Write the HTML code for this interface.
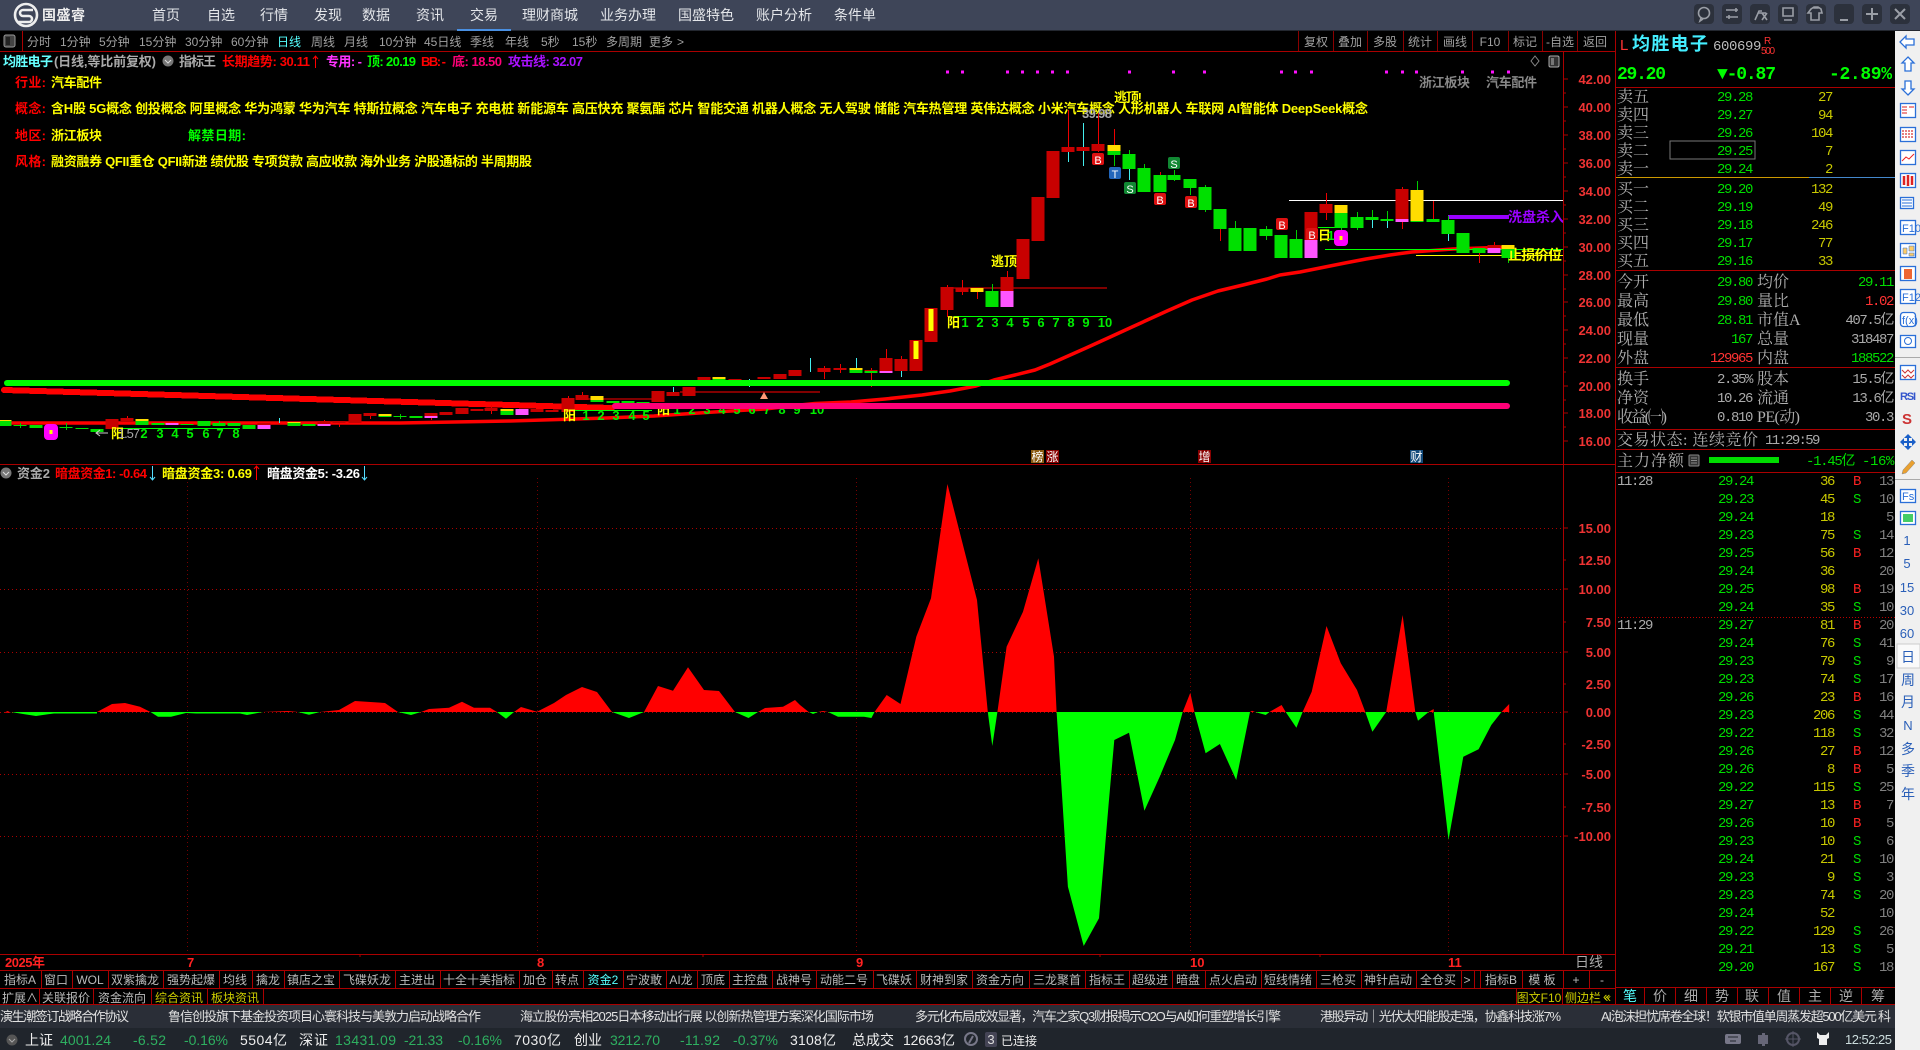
<!DOCTYPE html>
<html lang="zh-CN"><head><meta charset="utf-8"><title>国盛睿</title>
<style>
html,body{margin:0;padding:0;background:#000;width:1920px;height:1050px;overflow:hidden}
svg{position:absolute;left:0;top:0}
text{font-family:"Liberation Sans","WenQuanYi Zen Hei","Noto Sans CJK SC",sans-serif;font-size:13px}
.s text{font-size:12px}
.b text,text.b{font-weight:bold;font-family:"Liberation Sans","Noto Sans CJK SC",sans-serif}
.m text,text.m{font-family:"Liberation Mono","Noto Sans CJK SC",monospace;font-size:14px;letter-spacing:-1.4px}
.l text,text.l{font-family:"Liberation Serif","Noto Serif CJK SC",serif;font-size:16px}
.mid text{text-anchor:middle}
.end text,text.end{text-anchor:end}
#t{position:absolute;left:1617px;top:473px;width:276px;border-collapse:collapse;table-layout:fixed;font:14px/18px "Liberation Mono",monospace;letter-spacing:-1.4px}
#t td{padding:0;height:18px;white-space:nowrap;text-align:right;color:#808080}
#t td:nth-child(1){text-align:left;color:#aaa}
#t td:nth-child(2){color:#0d0}
#t td:nth-child(3){color:#c8c800}
#t td:nth-child(4){padding-right:4px;color:#0d0}
#t td.r{color:#f22!important}
</style></head><body>
<svg width="1920" height="1050" viewBox="0 0 1920 1050" xmlns="http://www.w3.org/2000/svg">
<clipPath id="c"><rect x="1508" y="205" width="55" height="25"/></clipPath>
<rect width="1920" height="30" fill="#3e4558"/>
<rect x="0" y="30" width="1920" height="1" fill="#23272f"/>
<rect x="457" y="29" width="54" height="2" fill="#4a90e2"/>
<!-- logo -->
<circle cx="26" cy="15" r="11" fill="none" stroke="#eee" stroke-width="2.6"/>
<path d="M33 10H23a3 3 0 0 0 0 6h6a3 3 0 0 1 0 6H18" fill="none" stroke="#eee" stroke-width="2.6"/>
<text class="b" x="42" y="20" textLength="43" style="font-size:14px" fill="#eee">国盛睿</text>
<g fill="#e4e6ea">
<text x="152" y="20" style="font-size:14px">首页</text><text x="207" y="20" style="font-size:14px">自选</text><text x="260" y="20" style="font-size:14px">行情</text><text x="314" y="20" style="font-size:14px">发现</text><text x="362" y="20" style="font-size:14px">数据</text><text x="416" y="20" style="font-size:14px">资讯</text><text x="470" y="20" style="font-size:14px">交易</text><text x="522" y="20" style="font-size:14px">理财商城</text><text x="600" y="20" style="font-size:14px">业务办理</text><text x="678" y="20" style="font-size:14px">国盛特色</text><text x="756" y="20" style="font-size:14px">账户分析</text><text x="834" y="20" style="font-size:14px">条件单</text>
</g>
<!-- window controls -->
<g fill="#2c313c"><rect x="1694" y="4" width="20" height="20" rx="4"/><rect x="1722" y="4" width="20" height="20" rx="4"/><rect x="1750" y="4" width="20" height="20" rx="4"/><rect x="1778" y="4" width="20" height="20" rx="4"/><rect x="1806" y="4" width="20" height="20" rx="4"/><rect x="1834" y="4" width="20" height="20" rx="4"/><rect x="1862" y="4" width="20" height="20" rx="4"/><rect x="1890" y="4" width="20" height="20" rx="4"/></g>
<g fill="none" stroke="#9a9ea6" stroke-width="1.6">
<circle cx="1704" cy="13" r="5.5"/><path d="M1701 18l-1 3 3-2"/><path d="M1726 10h12M1726 17h12M1736 8v4M1729 15v4"/>
<path d="M1755 20l4-9h3M1758 13h8M1762 13l5 7M1767 13l-5 7"/><path d="M1783 8h10v8h-10zM1784 20h8"/>
<path d="M1811 9l3-2h2l-1 1h2l-1-1h2l3 2 1 4-3 0v7h-8v-7l-3 0z"/><path d="M1840 20h8" stroke-width="2"/><path d="M1872 8v6h-6M1872 14h6M1872 14v6" stroke-width="2"/><path d="M1895 9l10 10M1905 9l-10 10" stroke-width="2"/>
</g>
<!-- toolbar -->
<rect x="4" y="35" width="11" height="12" rx="2" fill="#444" stroke="#999"/><rect x="6" y="37" width="4" height="8" fill="#222"/>
<rect x="22" y="31" width="1" height="20" fill="#a00"/>
<g class="s" fill="#a0a0a0">
<text x="27" y="46">分时</text><text x="60" y="46">1分钟</text><text x="99" y="46">5分钟</text><text x="139" y="46">15分钟</text><text x="185" y="46">30分钟</text><text x="231" y="46">60分钟</text><text x="277" y="46" fill="#5ff">日线</text><text x="311" y="46">周线</text><text x="344" y="46">月线</text><text x="379" y="46">10分钟</text><text x="424" y="46">45日线</text><text x="470" y="46">季线</text><text x="505" y="46">年线</text><text x="541" y="46">5秒</text><text x="572" y="46">15秒</text><text x="606" y="46">多周期</text><text x="649" y="46">更多</text><text x="677" y="46">&gt;</text>
</g>
<path d="M1298.5 31v20M1333.5 31v20M1367.5 31v20M1403.5 31v20M1437.5 31v20M1472.5 31v20M1508.5 31v20M1542.5 31v20M1577.5 31v20" stroke="#8a0000"/>
<g class="mid s" fill="#a0a0a0"><text x="1316" y="46">复权</text><text x="1350" y="46">叠加</text><text x="1385" y="46">多股</text><text x="1420" y="46">统计</text><text x="1455" y="46">画线</text><text x="1490" y="46">F10</text><text x="1525" y="46">标记</text><text x="1560" y="46">-自选</text><text x="1595" y="46">返回</text></g>
<rect x="0" y="51" width="1615" height="1" fill="#a00"/>
<!-- info row -->
<g class="b">
<text x="3" y="66" textLength="50" fill="#6ff">均胜电子</text>
<text x="54" y="66" textLength="102" fill="#aaa" font-weight="normal">(日线,等比前复权)</text>
<text x="179" y="66" textLength="37" fill="#aaa">指标王</text>
<text x="222" y="66" textLength="88" fill="#f00">长期趋势: 30.11</text>
<text x="326" y="66" textLength="36" fill="#f3f">专用: -</text>
<text x="367" y="66" textLength="49" fill="#0f0">顶: 20.19</text>
<text x="421" y="66" textLength="25" fill="#f00">BB: -</text>
<text x="452" y="66" textLength="50" fill="#f07">底: 18.50</text>
<text x="508" y="66" textLength="75" fill="#a1f">攻击线: 32.07</text>
</g>
<circle cx="168" cy="61" r="5.5" fill="#777"/><path d="M165 60l3 3 3-3" fill="none" stroke="#ddd"/>
<path d="M315.5 56v12M313 59l2.500-3 2.500 3" fill="none" stroke="#f00"/>
<path d="M1535 56l4 5-4 5-4-5z" fill="none" stroke="#888"/><rect x="1549" y="56" width="10" height="11" rx="1.500" fill="#333" stroke="#aaa"/><rect x="1551" y="58" width="3" height="7" fill="#777"/>
<path d="M946 70.500h3v3h-3zM961 70.500h3v3h-3zM1006 70.500h3v3h-3zM1021 70.500h3v3h-3zM1036 70.500h3v3h-3zM1051 70.500h3v3h-3zM1066 70.500h3v3h-3zM1128 70.500h3v3h-3zM1172 70.500h3v3h-3zM1203 70.500h3v3h-3zM1280 70.500h3v3h-3zM1294 70.500h3v3h-3zM1310 70.500h3v3h-3zM1385 70.500h3v3h-3zM1401 70.500h3v3h-3zM1415 70.500h3v3h-3zM1461 70.500h3v3h-3zM1491 70.500h3v3h-3zM1507 70.500h3v3h-3z" fill="#f1f"/>
<!-- chart axis -->
<rect x="1563" y="52" width="1" height="902" fill="#a00"/>
<rect x="1615" y="31" width="1" height="974" fill="#a00"/>
<path d="M1563 79h5M1563 107h5M1563 135h5M1563 163h5M1563 191h5M1563 219h5M1563 247h5M1563 275h5M1563 302h5M1563 330h5M1563 358h5M1563 386h5M1563 413h5M1563 441h5M1563 93h3M1563 121h3M1563 149h3M1563 177h3M1563 205h3M1563 233h3M1563 261h3M1563 289h3M1563 316h3M1563 344h3M1563 372h3M1563 400h3M1563 427h3M1563 528h5M1563 560h3M1563 589h5M1563 622h3M1563 652h5M1563 684h3M1563 712h5M1563 744h3M1563 774h5M1563 807h3M1563 836h5" stroke="#a00" fill="none"/>
<g class="b end" fill="#e33">
<text x="1611" y="84">42.00</text><text x="1611" y="112">40.00</text><text x="1611" y="140">38.00</text><text x="1611" y="168">36.00</text><text x="1611" y="196">34.00</text><text x="1611" y="224">32.00</text><text x="1611" y="252">30.00</text><text x="1611" y="280">28.00</text><text x="1611" y="307">26.00</text><text x="1611" y="335">24.00</text><text x="1611" y="363">22.00</text><text x="1611" y="391">20.00</text><text x="1611" y="418">18.00</text><text x="1611" y="446">16.00</text>
<text x="1611" y="533">15.00</text><text x="1611" y="565">12.50</text><text x="1611" y="594">10.00</text><text x="1611" y="627">7.50</text><text x="1611" y="657">5.00</text><text x="1611" y="689">2.50</text><text x="1611" y="717">0.00</text><text x="1611" y="749">-2.50</text><text x="1611" y="779">-5.00</text><text x="1611" y="812">-7.50</text><text x="1611" y="841">-10.00</text>
</g>
<!-- yellow text rows -->
<g class="b" fill="#f00"><text x="15" y="87" textLength="31">行业:</text><text x="15" y="113" textLength="31">概念:</text><text x="15" y="140" textLength="31">地区:</text><text x="15" y="166" textLength="31">风格:</text></g>
<g class="b" fill="#ff0">
<text x="51" y="87" textLength="51">汽车配件</text>
<text x="51" y="113" textLength="1317">含H股 5G概念 创投概念 阿里概念 华为鸿蒙 华为汽车 特斯拉概念 汽车电子 充电桩 新能源车 高压快充 聚氨酯 芯片 智能交通 机器人概念 无人驾驶 储能 汽车热管理 英伟达概念 小米汽车概念 人形机器人 车联网 AI智能体 DeepSeek概念</text>
<text x="51" y="140" textLength="51">浙江板块</text>
<text x="51" y="166" textLength="481">融资融券 QFII重仓 QFII新进 绩优股 专项贷款 高应收款 海外业务 沪股通标的 半周期股</text>
</g>
<text class="b" x="188" y="140" textLength="58" fill="#0f0">解禁日期:</text>
<g class="b" fill="#888"><text x="1419" y="87" textLength="51">浙江板块</text><text x="1486" y="87" textLength="51">汽车配件</text></g>
<!-- thick lines below candles -->
<path d="M4 390L612 408" stroke="#f00" stroke-width="6" fill="none" shape-rendering="crispEdges" stroke-linecap="round"/>
<path d="M0 423L400 423 510 421 607 418 654 416 714 412 765 409 800 405 815 403.500 851 402 885 399 922 395 950 391 976 386 994 380 1015 375 1035 370 1050 364 1086 348 1108 338 1132 327 1167 311 1192 300 1218 291 1243 285 1267 279 1280 275 1300 272 1325 267 1345 263 1366 259 1390 255 1412 252 1453 249 1509 247" stroke="#f00" stroke-width="3.500" fill="none" stroke-linejoin="round"/>
<!-- thin annotation lines -->
<path d="M948 288H1107M680 392H820M576 399H653" stroke="#f00" fill="none"/>
<path d="M954 316.500H1107M112 428.500H240M570 410.500H652M1318 227.500H1336M1325 249.500H1563" stroke="#0f0" fill="none"/>
<path d="M1289 200.500H1563" stroke="#fff" fill="none"/>
<path d="M1416 255.500H1563" stroke="#ff0" fill="none"/>
<rect x="1448" y="215" width="61" height="4" fill="#90f"/>
<!-- wicks -->
<path fill="none" stroke="#e00" d="M947.500 285V317M962.500 280V295M901.500 356V367M886.500 349V358M824.500 366V379M840.500 364V373M1007.500 271V277M1068.500 110V147M1098.500 113V152M1326.500 193V220M1402.500 187V229M1433.500 201V219M1494.500 242V245M1479.500 248V263M582.500 392V400M568.500 396V398M491.500 405V414M977.500 292V299M1083.500 140V147M871.500 368V387M339.500 421V427M370.500 413V419M431.500 413V420M324.500 420V424M127.500 416V421M1114.500 129V145M1160.500 172V175M1220.500 229V241"/>
<path fill="none" stroke="#0c0" d="M1114.500 155V166M1129.500 150V180M1144.500 164V168M1174.500 170V181M1190.500 188V195M1205.500 185V212M1235.500 221V228M1266.500 226V240M1296.500 230V239M1341.500 228V232M1357.500 212V230M1372.500 210V228M1387.500 211V228M1448.500 216V241M1417.500 181V190M992.500 284V291M66.500 423V430M20.500 423V428M1508.500 258V263M400.500 414V419M219.500 421V423"/>
<path fill="none" stroke="#4ee" d="M1068.500 152V162M1083.500 123V166M856.500 358V368M810.500 358V372M279.500 418V423M749.500 379V387M673.500 387V392M901.500 371V377M1129.500 169V180M1372.500 220V228M1387.500 221V228M1448.500 234V241"/>
<!-- bodies: red -->
<path fill="#c80000" d="M105.500 419h13v10h-13zM120.500 418h13v3h-13zM257.500 423h13v2h-13zM317.500 421h13v3h-13zM332.500 421h13v2h-13zM348.500 414h13v9h-13zM363.500 413h13v3h-13zM424.500 413h13v3h-13zM439.500 412h13v3h-13zM455.500 408h13v6h-13zM470.500 409h13v2h-13zM484.500 408h13v3h-13zM530.500 409h13v3h-13zM545.500 410h13v2h-13zM561.500 398h13v14h-13zM575.500 395h13v5h-13zM651.500 391h13v11h-13zM666.500 392h13v4h-13zM682.500 387h13v9h-13zM697.500 377h13v3h-13zM728.500 379h13v1h-13zM757.500 377h13v2h-13zM773.500 374h13v5h-13zM788.500 370h13v6h-13zM817.500 368h13v4h-13zM833.500 368h13v2h-13zM864.500 370h13v1h-13zM879.500 358h13v13h-13zM894.500 359h13v12h-13zM909.500 340h13v31h-13zM924.500 308h13v34h-13zM940.500 287h13v23h-13zM955.500 288h13v4h-13zM1000.500 277h13v14h-13zM1016.500 239h13v40h-13zM1031.500 197h13v44h-13zM1046.500 151h13v47h-13zM1061.500 147h13v5h-13zM1076.500 147h13v4h-13zM1091.500 144h13v7h-13zM1319.500 204h13v9h-13zM1304.500 212h13v28h-13zM1395.500 189h13v30h-13zM1487.500 245h13v3h-13z"/>
<!-- bodies: green -->
<path fill="#00e000" d="M-1.500 421h13v5h-13zM13.500 425h13v1h-13zM29.500 425h13v3h-13zM59.500 427h13v1h-13zM75.500 428h13v1h-13zM90.500 429h13v3h-13zM135.500 421h13v4h-13zM151.500 423h13v2h-13zM180.500 424h13v1h-13zM197.500 421h13v5h-13zM212.500 423h13v3h-13zM227.500 423h13v3h-13zM242.500 425h13v4h-13zM287.500 423h13v3h-13zM302.500 424h13v2h-13zM378.500 416h13v1h-13zM393.500 416h13v1h-13zM409.500 416h13v2h-13zM500.500 411h13v4h-13zM590.500 400h13v2h-13zM606.500 401h13v2h-13zM621.500 401h13v2h-13zM636.500 402h13v1h-13zM712.500 379h13v1h-13zM849.500 370h13v3h-13zM864.500 371h13v2h-13zM985.500 291h13v16h-13zM1107.500 151h13v4h-13zM1122.500 154h13v15h-13zM1137.500 168h13v24h-13zM1153.500 175h13v17h-13zM1167.500 175h13v5h-13zM1183.500 179h13v9h-13zM1198.500 187h13v23h-13zM1213.500 209h13v20h-13zM1228.500 228h13v23h-13zM1243.500 228h13v23h-13zM1259.500 229h13v7h-13zM1274.500 235h13v23h-13zM1289.500 239h13v19h-13zM1334.500 213h13v15h-13zM1350.500 217h13v11h-13zM1365.500 217h13v3h-13zM1380.500 219h13v2h-13zM1410.500 221h13v1h-13zM1426.500 219h13v3h-13zM1441.500 220h13v14h-13zM1456.500 233h13v20h-13zM1472.500 248h13v5h-13zM1501.500 249h13v9h-13z"/>
<!-- bodies: yellow -->
<path fill="#fd0" d="M-1.500 420h13v1h-13zM135.500 419h13v2h-13zM287.500 422h13v1h-13zM378.500 414h13v2h-13zM500.500 409h13v2h-13zM590.500 396h13v4h-13zM712.500 377h13v2h-13zM849.500 368h13v2h-13zM970.500 288h13v4h-13zM1107.500 145h13v6h-13zM1334.500 205h13v8h-13zM1410.500 190h13v31h-13zM1501.500 245h13v4h-13z"/>
<path fill="#ff0" d="M913.500 341h5v18h-5zM928.500 309h5v22h-5z"/>
<!-- bodies: magenta -->
<path fill="#ff55ff" d="M165.500 423h13v2h-13zM257.500 425h13v4h-13zM317.500 424h13v2h-13zM424.500 416h13v2h-13zM515.500 409h13v6h-13zM879.500 371h13v2h-13zM1000.500 291h13v16h-13zM1304.500 240h13v18h-13zM1395.500 219h13v3h-13zM1487.500 248h13v5h-13z"/>
<!-- flowers -->
<rect x="44" y="424" width="14" height="16" rx="4" fill="#f0f"/><rect x="49.500" y="430" width="3" height="4" fill="#ff0"/>
<rect x="1334" y="230" width="14" height="16" rx="4" fill="#f0f"/><rect x="1339.500" y="236" width="3" height="4" fill="#ff0"/>
<!-- B/S/T markers -->
<g>
<rect x="1092" y="153" width="12" height="12" rx="2" fill="#d11"/><rect x="1154" y="193" width="12" height="12" rx="2" fill="#d11"/><rect x="1185" y="196" width="12" height="12" rx="2" fill="#d11"/><rect x="1276" y="218" width="12" height="12" rx="2" fill="#d11"/><rect x="1306" y="228" width="12" height="12" rx="2" fill="#d11"/>
<rect x="1109" y="167" width="12" height="12" rx="2" fill="#26b"/>
<rect x="1124" y="182" width="12" height="12" rx="2" fill="#183"/><rect x="1168" y="157" width="12" height="12" rx="2" fill="#183"/>
</g>
<g class="mid" fill="#fff"><text x="1098" y="164" style="font-size:11px">B</text><text x="1160" y="204" style="font-size:11px">B</text><text x="1191" y="207" style="font-size:11px">B</text><text x="1282" y="229" style="font-size:11px">B</text><text x="1312" y="239" style="font-size:11px">B</text><text x="1115" y="178" style="font-size:11px">T</text><text x="1130" y="193" style="font-size:11px">S</text><text x="1174" y="168" style="font-size:11px">S</text></g>
<!-- annotation text -->
<g class="b" fill="#ff0"><text x="991" y="266" textLength="26">逃顶</text><text x="1114" y="102" textLength="28">逃顶!</text><text x="947" y="327" textLength="12">阳</text><text x="563" y="420" textLength="12">阳</text><text x="657" y="414" textLength="12">阳</text><text x="111" y="438" textLength="13">阳</text><text x="1318" y="240" textLength="8">日</text></g>
<text class="b" x="1082" y="118" textLength="30" fill="#aaa">39.98</text>
<path d="M108 433H96M100 430l-4 3 4 3" fill="none" stroke="#ccc"/><text x="118" y="438" textLength="22" fill="#aaa">1.57</text>
<g class="b mid" fill="#0e0">
<text x="965" y="327">1</text><text x="980" y="327">2</text><text x="995" y="327">3</text><text x="1010" y="327">4</text><text x="1026" y="327">5</text><text x="1041" y="327">6</text><text x="1056" y="327">7</text><text x="1071" y="327">8</text><text x="1086" y="327">9</text><text x="1105" y="327">10</text>
<text x="144" y="438">2</text><text x="160" y="438">3</text><text x="175" y="438">4</text><text x="190" y="438">5</text><text x="206" y="438">6</text><text x="220" y="438">7</text><text x="236" y="438">8</text>
<text x="586" y="420">1</text><text x="601" y="420">2</text><text x="616" y="420">3</text><text x="632" y="420">4</text><text x="646" y="420">5</text>
<text x="677" y="414">1</text><text x="692" y="414">2</text><text x="707" y="414">3</text><text x="722" y="414">4</text><text x="737" y="414">5</text><text x="752" y="414">6</text><text x="767" y="414">7</text><text x="782" y="414">8</text><text x="797" y="414">9</text><text x="817" y="414">10</text>
<text x="1331" y="240">1</text>
</g>
<path d="M764 392l4 7h-8z" fill="#f97"/>
<text class="b" x="1508" y="222" textLength="70" fill="#90f" clip-path="url(#c)" style="font-size:14px">洗盘杀入线</text>
<text class="b" x="1508" y="260" textLength="54" fill="#ff0" style="font-size:14px">止损价位</text>
<!-- green and pink thick lines -->
<path d="M7 383H1507" stroke="#0f0" stroke-width="6" stroke-linecap="round"/>
<path d="M615 406H1507" stroke="#f07" stroke-width="6" stroke-linecap="round"/>
<!-- bottom badges -->
<rect x="1031" y="450" width="13" height="13" fill="#8a5a10"/><rect x="1046" y="450" width="13" height="13" fill="#800"/><rect x="1198" y="450" width="13" height="13" fill="#800"/><rect x="1410" y="450" width="13" height="13" fill="#134a7a"/>
<g class="mid" fill="#fff"><text x="1037.500" y="461" style="font-size:12px">榜</text><text x="1052.500" y="461" style="font-size:12px">涨</text><text x="1204.500" y="461" style="font-size:12px">增</text><text x="1416.500" y="461" style="font-size:12px">财</text></g>
<rect x="0" y="464" width="1615" height="1" fill="#a00"/>
<!-- sub chart header -->
<circle cx="6" cy="473" r="5.500" fill="#777"/><path d="M3 472l3 3 3-3" fill="none" stroke="#ddd"/>
<g class="b"><text x="17" y="478" textLength="33" fill="#aaa">资金2</text><text x="55" y="478" textLength="92" fill="#f00">暗盘资金1: -0.64</text><text x="162" y="478" textLength="90" fill="#ff0">暗盘资金3: 0.69</text><text x="267" y="478" textLength="93" fill="#fff">暗盘资金5: -3.26</text></g>
<path d="M152.500 466v14M150 477l2.500 3 2.500-3M364.500 466v14M362 477l2.500 3 2.500-3" fill="none" stroke="#5df"/><path d="M256.500 466v14M254 469l2.500-3 2.500 3" fill="none" stroke="#f00"/>
<!-- grid -->
<path d="M0 528.500H1563M0 589.500H1563M0 652.500H1563M0 712.500H1563M0 774.500H1563M0 836.500H1563" stroke="#a00" stroke-dasharray="1 3" fill="none"/>
<path d="M187.500 478V954M537.500 478V954M856.500 478V954M1190.500 478V954M1448.500 478V954" stroke="#700" stroke-dasharray="1 3" fill="none"/>
<!-- sub chart -->
<path fill="#f00" d="M4 712.700L7.600 711 11 712.700ZM97 712 112 704 125 703 140 706.700 150.500 712ZM263 712 288 711 298 712ZM320 712 339 710 355 701 385 703 398 712ZM421 712 429 709 449 707.700 462 701.700 474 707.700 490 707.700 497 712ZM514 712 521 707 537 711.700 554 703 566 695 582 687 597 692 612 712ZM644 712 658 686 673 690.700 688 667.300 704 690 719 691 735 712ZM758 712 765 708 783 706.700 795 700 800 705 808.700 712ZM818 712 823 711 828 712ZM874.500 712 886.700 695 900.500 704 916.300 636.700 931 598.300 947.400 484 977 600 987.800 712ZM997.400 712 1006.600 646.700 1023 611.700 1038.300 558.300 1054 656.700 1056.600 712ZM1182.700 712 1190.300 692.700 1194.400 712ZM1250 712 1252 710.700 1255 712ZM1269.400 712 1281.600 705 1285.700 712ZM1302.600 712 1311.700 691.700 1326.500 626 1340.800 663.300 1357 690 1365.300 712ZM1386.200 712 1402.600 615 1415.300 712ZM1428.600 712 1433.700 709 1433.700 712ZM1501.500 712 1509.200 704 1509.200 712Z"/>
<path fill="#0f0" d="M11 712 23 714 36 716 48 714.300 54 713.500 97 713.500 97 712ZM150.500 712 158 716.700 171 716.700 186 713 196 713.500 240 713.500 247 715 255 713.500 263 712ZM298 712 309 714.700 320 712ZM398 712 411 715 421 712ZM497 712 506 718.700 514 712ZM612 712 629 718 644 712ZM735 712 748.500 718 758 712ZM809 712 813 714 818 712ZM828 712 838 716.700 864 716.700 871.400 718 874.500 712ZM987.800 712 992.300 746 997.400 712ZM1056.600 712 1061.700 790 1067.900 886.700 1083.700 946 1099 918.300 1108.700 803.300 1114.300 740 1129 732.700 1144.400 810.700 1159.700 776.700 1175 740 1182.700 712ZM1194.400 712 1205.600 753.300 1219.900 744 1236.200 780 1250 712ZM1255 712 1265.800 715 1269.400 712ZM1285.700 712 1296.400 727.700 1302.600 712ZM1365.300 712 1372.400 731.700 1386.200 712ZM1415.300 712 1418 720.700 1428.600 712ZM1433.700 712 1448.500 840 1463.300 756.700 1478.600 749.300 1491.300 725 1501.500 712Z"/>
<!-- date row -->
<rect x="0" y="954" width="1615" height="1" fill="#a00"/>
<rect x="0" y="970" width="1615" height="1" fill="#a00"/>
<g class="b" fill="#f22"><text x="5" y="967" textLength="40">2025年</text><text x="187" y="967">7</text><text x="537" y="967">8</text><text x="856" y="967">9</text><text x="1190" y="967">10</text><text x="1448" y="967">11</text></g>
<text x="1575" y="967" fill="#aaa" style="font-size:14px">日线</text>
<path d="M360 954v3M703 954v3M1100 954v3M1320 954v3" stroke="#a00"/>
<!-- tab row -->
<rect x="0" y="988" width="1615" height="1" fill="#a00"/>
<path d="M41.500 971V988M72.500 971V988M108.500 971V988M163.500 971V988M219.500 971V988M252.500 971V988M284.500 971V988M339.500 971V988M395.500 971V988M440.500 971V988M519.500 971V988M552.500 971V988M583.500 971V988M623.500 971V988M666.500 971V988M697.500 971V988M729.500 971V988M772.500 971V988M816.500 971V988M873.500 971V988M916.500 971V988M972.500 971V988M1029.500 971V988M1085.500 971V988M1129.500 971V988M1172.500 971V988M1205.500 971V988M1261.500 971V988M1316.500 971V988M1361.500 971V988M1416.500 971V988M1461.500 971V988M1474.500 971V988M1480.500 971V988M1522.500 971V988M1563.500 971V988M1589.500 971V988" stroke="#a00"/>
<g class="mid s" fill="#bbb"><text x="20" y="984">指标A</text><text x="56" y="984">窗口</text><text x="90" y="984">WOL</text><text x="135" y="984">双紫擒龙</text><text x="191" y="984">强势起爆</text><text x="235" y="984">均线</text><text x="268" y="984">擒龙</text><text x="311" y="984">镇店之宝</text><text x="367" y="984">飞碟妖龙</text><text x="417" y="984">主进出</text><text x="479" y="984">十全十美指标</text><text x="535" y="984">加仓</text><text x="567" y="984">转点</text><text x="603" y="984" fill="#5ff">资金2</text><text x="644" y="984">宁波敢</text><text x="681" y="984">AI龙</text><text x="713" y="984">顶底</text><text x="750" y="984">主控盘</text><text x="794" y="984">战神号</text><text x="844" y="984">动能二号</text><text x="894" y="984">飞碟妖</text><text x="944" y="984">财神到家</text><text x="1000" y="984">资金方向</text><text x="1057" y="984">三龙聚首</text><text x="1107" y="984">指标王</text><text x="1150" y="984">超级进</text><text x="1188" y="984">暗盘</text><text x="1233" y="984">点火启动</text><text x="1288" y="984">短线情绪</text><text x="1338" y="984">三枪买</text><text x="1388" y="984">神针启动</text><text x="1438" y="984">全仓买</text><text x="1467" y="984">&gt;</text><text x="1501" y="984">指标B</text><text x="1542" y="984">模 板</text><text x="1576" y="984">+</text><text x="1602" y="984">-</text></g>
<!-- second row -->
<rect x="0" y="1004" width="1615" height="1" fill="#a00"/>
<path d="M39.500 989V1005M93.500 989V1005M151.500 989V1005M207.500 989V1005M263.500 989V1005M1516.500 989V1005M1562.500 989V1005" stroke="#a00"/>
<g class="mid s"><text x="20" y="1002" fill="#bbb">扩展∧</text><text x="66" y="1002" fill="#bbb">关联报价</text><text x="122" y="1002" fill="#bbb">资金流向</text><text x="179" y="1002" fill="#cc0">综合资讯</text><text x="235" y="1002" fill="#cc0">板块资讯</text><text x="1539" y="1002" fill="#cc0">图文F10</text><text x="1588" y="1002" fill="#cc0">侧边栏 «</text></g>
<!-- news bar -->
<rect x="0" y="1005" width="1895" height="23" fill="#2a2e37"/>
<g fill="#e0e0e0"><text x="0" y="1021" textLength="129">演生潮签订战略合作协议</text><text x="168" y="1021" textLength="313">鲁信创投旗下基金投资项目心寰科技与美敦力启动战略合作</text><text x="520" y="1021" textLength="354">海立股份亮相2025日本移动出行展 以创新热管理方案深化国际市场</text><text x="915" y="1021" textLength="366">多元化布局成效显著，汽车之家Q3财报揭示O2O与AI如何重塑增长引擎</text><text x="1320" y="1021" textLength="241">港股异动｜光伏太阳能股走强，协鑫科技涨7%</text><text x="1601" y="1021" textLength="290">AI泡沫担忧席卷全球！软银市值单周蒸发超500亿美元 科</text></g>
<!-- status bar -->
<rect x="0" y="1028" width="1895" height="22" fill="#20252c"/>
<circle cx="12" cy="1040" r="5.500" fill="#555"/><path d="M9 1039l3 3 3-3" fill="none" stroke="#aaa"/>
<g>
<text x="25" y="1045" fill="#eee" textLength="28" style="font-size:14px">上证</text><text x="60" y="1045" fill="#2eb060" textLength="51" style="font-size:14px">4001.24</text><text x="133" y="1045" fill="#2eb060" textLength="33" style="font-size:14px">-6.52</text><text x="184" y="1045" fill="#2eb060" textLength="44" style="font-size:14px">-0.16%</text><text x="240" y="1045" fill="#eee" textLength="47" style="font-size:14px">5504亿</text>
<text x="299" y="1045" fill="#eee" textLength="29" style="font-size:14px">深证</text><text x="335" y="1045" fill="#2eb060" textLength="61" style="font-size:14px">13431.09</text><text x="404" y="1045" fill="#2eb060" textLength="39" style="font-size:14px">-21.33</text><text x="458" y="1045" fill="#2eb060" textLength="44" style="font-size:14px">-0.16%</text><text x="514" y="1045" fill="#eee" textLength="47" style="font-size:14px">7030亿</text>
<text x="574" y="1045" fill="#eee" textLength="28" style="font-size:14px">创业</text><text x="610" y="1045" fill="#2eb060" textLength="50" style="font-size:14px">3212.70</text><text x="680" y="1045" fill="#2eb060" textLength="40" style="font-size:14px">-11.92</text><text x="733" y="1045" fill="#2eb060" textLength="45" style="font-size:14px">-0.37%</text><text x="790" y="1045" fill="#eee" textLength="46" style="font-size:14px">3108亿</text>
<text x="852" y="1045" fill="#eee" textLength="42" style="font-size:14px">总成交</text><text x="903" y="1045" fill="#eee" textLength="52" style="font-size:14px">12663亿</text>
<text x="1001" y="1045" fill="#eee" textLength="36" style="font-size:12px">已连接</text>
</g>
<circle cx="971" cy="1039" r="6" fill="none" stroke="#778" stroke-width="2"/><path d="M969 1043l4-7" stroke="#778" stroke-width="2"/>
<rect x="985" y="1032" width="12" height="15" rx="2" fill="#445"/><text x="991" y="1044" text-anchor="middle" fill="#ddd">3</text>
<rect x="1725" y="1034" width="16" height="10" rx="2" fill="#778"/><path d="M1728 1037h10M1730 1041h6" stroke="#20252c"/>
<path d="M1758 1035h4v-2h3v2h3v9h-3v2h-3v-2h-4z" fill="#667"/>
<circle cx="1793" cy="1039" r="6" fill="none" stroke="#556" stroke-width="2"/><path d="M1793 1031v16M1785 1039h16" stroke="#556"/>
<path d="M1817 1032l3 3h6l3-3v6l-2 1v6h-8v-6l-2-1z" fill="#eee"/>
<text x="1845" y="1044" textLength="47" fill="#cdd" style="font-size:13px">12:52:25</text>
<!-- right panel -->
<rect x="1616" y="87" width="279" height="1" fill="#a00"/>
<rect x="1616" y="177" width="193" height="1" fill="#c90"/><rect x="1809" y="177" width="86" height="1" fill="#48c"/>
<rect x="1616" y="270" width="279" height="1" fill="#a00"/>
<rect x="1616" y="367" width="279" height="1" fill="#a00"/>
<rect x="1616" y="429" width="279" height="1" fill="#a00"/>
<rect x="1616" y="449" width="279" height="1" fill="#a00"/>
<rect x="1616" y="472" width="279" height="1" fill="#a00"/>
<path d="M1618 617.500H1895" stroke="#b00" stroke-dasharray="1 2"/>
<text x="1620" y="50" fill="#f33" style="font-size:15px">L</text>
<text class="b" x="1632" y="50" textLength="76" fill="#4ef" style="font-size:18px">均胜电子</text>
<text class="m" x="1713" y="50" fill="#bbb" textLength="47">600699</text>
<text x="1764" y="44" fill="#f33" style="font-size:10px">R</text><text x="1761" y="54" fill="#f33" textLength="14" style="font-size:10px">500</text>
<g class="b" fill="#0f0"><text x="1617" y="79" textLength="49" style="font-size:18px;font-family:'Liberation Mono'">29.20</text><text x="1717" y="79" textLength="59" style="font-size:18px;font-family:'Liberation Mono'">▼-0.87</text><text x="1829" y="79" textLength="63" style="font-size:18px;font-family:'Liberation Mono'">-2.89%</text></g>
<rect x="1670" y="141" width="85" height="18" fill="none" stroke="#777"/>
<g class="l" fill="#b0b0b0">
<text x="1617" y="102">卖五</text><text x="1617" y="120">卖四</text><text x="1617" y="138">卖三</text><text x="1617" y="156">卖二</text><text x="1617" y="174">卖一</text>
<text x="1617" y="194">买一</text><text x="1617" y="212">买二</text><text x="1617" y="230">买三</text><text x="1617" y="248">买四</text><text x="1617" y="266">买五</text>
<text x="1617" y="287">今开</text><text x="1617" y="306">最高</text><text x="1617" y="325">最低</text><text x="1617" y="344">现量</text><text x="1617" y="363">外盘</text>
<text x="1617" y="384">换手</text><text x="1617" y="403">净资</text><text x="1617" y="422" textLength="50">收益(㈠)</text>
<text x="1757" y="287">均价</text><text x="1757" y="306">量比</text><text x="1757" y="325">市值A</text><text x="1757" y="344">总量</text><text x="1757" y="363">内盘</text><text x="1757" y="384">股本</text><text x="1757" y="403">流通</text><text x="1757" y="422" textLength="43">PE(动)</text>
<text x="1617" y="445" textLength="141">交易状态: 连续竞价</text><text x="1617" y="466" textLength="67">主力净额</text>
</g>
<g class="m end" fill="#0d0">
<text x="1752" y="101">29.28</text><text x="1752" y="119">29.27</text><text x="1752" y="137">29.26</text><text x="1752" y="155">29.25</text><text x="1752" y="173">29.24</text>
<text x="1752" y="193">29.20</text><text x="1752" y="211">29.19</text><text x="1752" y="229">29.18</text><text x="1752" y="247">29.17</text><text x="1752" y="265">29.16</text>
<text x="1752" y="286">29.80</text><text x="1752" y="305">29.80</text><text x="1752" y="324">28.81</text><text x="1752" y="343">167</text>
<text x="1893" y="286">29.11</text><text x="1893" y="362">188522</text>
</g>
<g class="m end" fill="#c8c800">
<text x="1832" y="101">27</text><text x="1832" y="119">94</text><text x="1832" y="137">104</text><text x="1832" y="155">7</text><text x="1832" y="173">2</text>
<text x="1832" y="193">132</text><text x="1832" y="211">49</text><text x="1832" y="229">246</text><text x="1832" y="247">77</text><text x="1832" y="265">33</text>
</g>
<g class="m end" fill="#f33"><text x="1752" y="362">129965</text><text x="1893" y="305">1.02</text></g>
<g class="m end" fill="#aaa">
<text x="1893" y="324">407.5亿</text><text x="1893" y="343">318487</text><text x="1893" y="383">15.5亿</text><text x="1893" y="402">13.6亿</text><text x="1893" y="421">30.3</text>
<text x="1752" y="383">2.35%</text><text x="1752" y="402">10.26</text><text x="1752" y="421">0.810</text>
</g>
<text class="m" x="1765" y="444" fill="#aaa" textLength="54">11:29:59</text>
<rect x="1689" y="455" width="10" height="11" rx="1" fill="#333" stroke="#888"/><path d="M1691 458h6M1691 460.500h6M1691 463h6" stroke="#888"/>
<rect x="1709" y="457" width="70" height="6" fill="#0d0"/>
<text class="m" x="1806" y="465" textLength="48" fill="#0d0">-1.45亿</text><text class="m" x="1862" y="465" textLength="31" fill="#0d0">-16%</text>
<!-- panel bottom tabs -->
<rect x="1616" y="987" width="279" height="1" fill="#a00"/>
<rect x="1600" y="1004" width="295" height="1" fill="#a00"/>
<path d="M1644.500 987V1005M1675.500 987V1005M1706.500 987V1005M1737.500 987V1005M1768.500 987V1005M1799.500 987V1005M1830.500 987V1005M1861.500 987V1005" stroke="#a00"/>
<text x="1603" y="1001" fill="#cc0">«</text>
<g class="mid" fill="#aaa"><text x="1630" y="1001" fill="#5ff" style="font-size:14px">笔</text><text x="1660" y="1001" style="font-size:14px">价</text><text x="1691" y="1001" style="font-size:14px">细</text><text x="1722" y="1001" style="font-size:14px">势</text><text x="1752" y="1001" style="font-size:14px">联</text><text x="1784" y="1001" style="font-size:14px">值</text><text x="1815" y="1001" style="font-size:14px">主</text><text x="1846" y="1001" style="font-size:14px">逆</text><text x="1878" y="1001" style="font-size:14px">筹</text></g>
<!-- sidebar -->
<rect x="1895" y="31" width="25" height="1019" fill="#f0f0f0"/>
<g fill="#fff" stroke="#2a6fd8" stroke-width="1.300">
<path d="M1900 42l6-6v3h8v6h-8v3z"/><path d="M1908 57l6 6h-3v8h-6v-8h-3z"/><path d="M1908 95l6-6h-3v-8h-6v8h-3z"/>
<rect x="1900.500" y="103.500" width="15" height="14"/><rect x="1900.500" y="127.500" width="15" height="14"/><rect x="1900.500" y="150.500" width="15" height="14"/><rect x="1900.500" y="173.500" width="15" height="14"/><rect x="1900.500" y="197.500" width="13" height="11"/>
<rect x="1900.500" y="220.500" width="15" height="14"/><rect x="1900.500" y="243.500" width="15" height="14"/><rect x="1900.500" y="266.500" width="15" height="14"/><rect x="1900.500" y="289.500" width="15" height="14"/><rect x="1900.500" y="312.500" width="15" height="14" rx="3"/><rect x="1900.500" y="335.500" width="15" height="12"/><rect x="1900.500" y="365.500" width="15" height="14"/><rect x="1900.500" y="489.500" width="15" height="13"/><rect x="1900.500" y="511.500" width="15" height="13"/>
</g>
<path d="M1902 107h5M1902 110h5M1902 113h5M1909 107h5" stroke="#d22" fill="none"/><path d="M1902 131h11M1902 134h11M1902 137h11" stroke="#c00" stroke-dasharray="2 1" fill="none"/>
<path d="M1902 161l4-4 3 2 5-5" stroke="#e22" fill="none"/>
<path d="M1904 176v9M1908 175v11M1912 176v9" stroke="#d22" stroke-width="2.500" fill="none"/>
<path d="M1902 200h10M1902 203h10M1902 206h10" stroke="#2a6fd8" fill="none"/>
<path d="M1903 248h4v6h-4zM1909 246h5v5h-5zM1909 253h5v3h-5z" fill="#fc6" stroke="#2a6fd8" stroke-width=".5"/>
<path d="M1904 269h8v10h-8z" fill="#e63"/>
<g fill="#2a6fd8"><text x="1902" y="232" style="font-size:11px">F10</text><text x="1902" y="301" style="font-size:11px">F12</text><text x="1902" y="324" style="font-size:11px">f(x)</text><text x="1902" y="500" style="font-size:11px">Fs</text></g>
<circle cx="1908" cy="341" r="3.500" fill="none" stroke="#2a6fd8"/>
<rect x="1895" y="357" width="25" height="1" fill="#aaa"/><rect x="1895" y="479" width="25" height="1" fill="#aaa"/>
<path d="M1902 370l3 3 3-3 3 3 3-3M1902 375l3 3 3-3 3 3 3-3" stroke="#c33" fill="none"/>
<text class="b" x="1900" y="400" fill="#35c" textLength="16" style="font-size:11px">RSI</text>
<text class="b" x="1902" y="424" fill="#c33" style="font-size:15px">S</text>
<path d="M1908 434l4 4h-3v3h3v-3l4 4-4 4v-3h-3v3h3l-4 4-4-4h3v-3h-3v3l-4-4 4-4v3h3v-3h-3z" fill="#1a5fc8"/>
<path d="M1903 470l9-10 3 3-9 10-4 1z" fill="#e9a030" stroke="#888" stroke-width=".5"/>
<rect x="1903" y="514" width="10" height="8" fill="#4c6"/>
<rect x="1897" y="644" width="23" height="24" fill="#fafafa" stroke="#ccc"/>
<g class="mid" fill="#2a5fb8"><text x="1907" y="545">1</text><text x="1907" y="568">5</text><text x="1907" y="592">15</text><text x="1907" y="615">30</text><text x="1907" y="638">60</text><text x="1908" y="662" style="font-size:14px">日</text><text x="1908" y="685" style="font-size:14px">周</text><text x="1908" y="707" style="font-size:14px">月</text><text x="1908" y="730">N</text><text x="1908" y="754" style="font-size:14px">多</text><text x="1908" y="776" style="font-size:14px">季</text><text x="1908" y="799" style="font-size:14px">年</text></g>
</svg>
<table id="t"><colgroup><col style="width:60px"><col style="width:76px"><col style="width:81px"><col style="width:30px"><col style="width:29px"></colgroup>
<tr><td>11:28<td>29.24<td>36<td class="r">B<td>13
<tr><td><td>29.23<td>45<td>S<td>10
<tr><td><td>29.24<td>18<td><td>5
<tr><td><td>29.23<td>75<td>S<td>14
<tr><td><td>29.25<td>56<td class="r">B<td>12
<tr><td><td>29.24<td>36<td><td>20
<tr><td><td>29.25<td>98<td class="r">B<td>19
<tr><td><td>29.24<td>35<td>S<td>10
<tr><td>11:29<td>29.27<td>81<td class="r">B<td>20
<tr><td><td>29.24<td>76<td>S<td>41
<tr><td><td>29.23<td>79<td>S<td>9
<tr><td><td>29.23<td>74<td>S<td>17
<tr><td><td>29.26<td>23<td class="r">B<td>16
<tr><td><td>29.23<td>206<td>S<td>44
<tr><td><td>29.22<td>118<td>S<td>32
<tr><td><td>29.26<td>27<td class="r">B<td>12
<tr><td><td>29.26<td>8<td class="r">B<td>5
<tr><td><td>29.22<td>115<td>S<td>25
<tr><td><td>29.27<td>13<td class="r">B<td>7
<tr><td><td>29.26<td>10<td class="r">B<td>5
<tr><td><td>29.23<td>10<td>S<td>6
<tr><td><td>29.24<td>21<td>S<td>10
<tr><td><td>29.23<td>9<td>S<td>3
<tr><td><td>29.23<td>74<td>S<td>20
<tr><td><td>29.24<td>52<td><td>10
<tr><td><td>29.22<td>129<td>S<td>26
<tr><td><td>29.21<td>13<td>S<td>5
<tr><td><td>29.20<td>167<td>S<td>18
</table>
</body></html>
